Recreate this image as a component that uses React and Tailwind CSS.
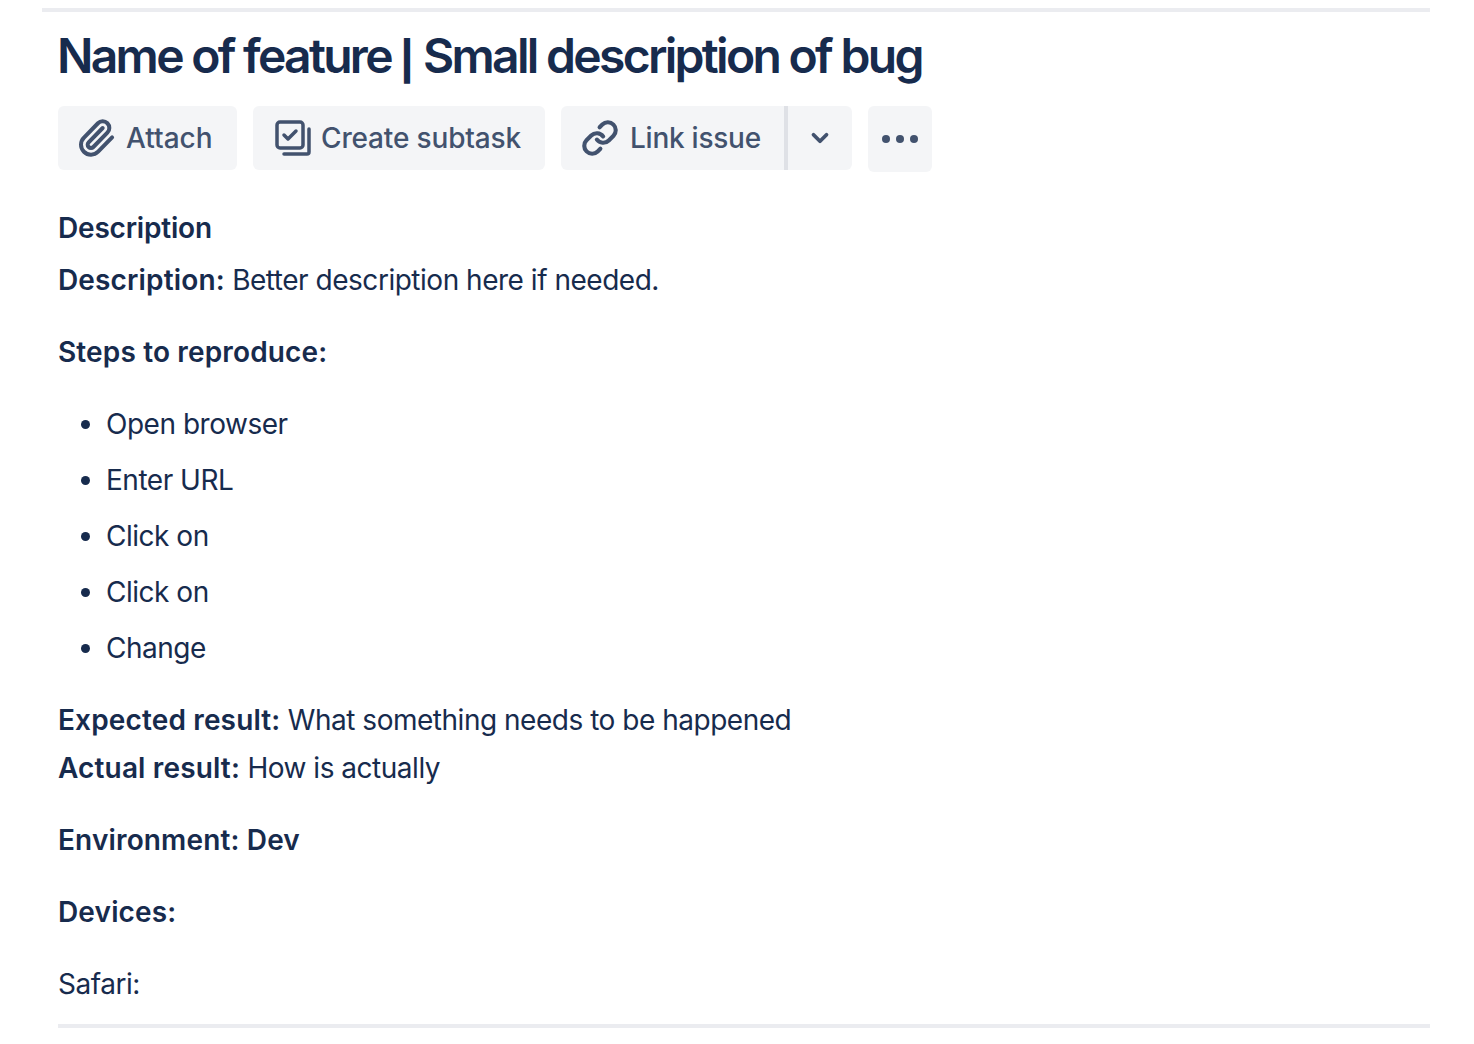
import React from "react";
import { Link, Paperclip, ChevronDown } from "lucide-react";

const SubtaskIcon = () => (
  <svg width="36" height="36" viewBox="0 0 36 36" fill="none" stroke="#42526e" strokeLinecap="round" strokeLinejoin="round">
    <rect x="2" y="2" width="26" height="26" rx="3" strokeWidth="3.5" />
    <path d="m9 15 4 4 8-8" strokeWidth="3.500" />
    <path d="M9 34h23a2 2 0 0 0 2-2V9" strokeWidth="3.500" />
  </svg>
);

const Button = ({ icon, label, className = "" }) => (
  <button className={`h-16 flex items-center bg-[#f4f5f7] text-[#42526e] text-[28px] font-medium ${className}`}>
    {icon}
    <span>{label}</span>
  </button>
);

const Bold = ({ children }) => <strong className="font-semibold tracking-[0.15px]">{children}</strong>;

const steps = ["Open browser", "Enter URL", "Click on", "Click on", "Change"];

export default function App() {
  return (
    <div className="min-h-screen bg-white text-[#172b4d] font-['Inter',sans-serif] pt-2 pr-11 pl-[42px]">
      <div className="h-1 bg-[#ebecf0]" />
      <div className="pl-4">
        <h1 className="mt-5 -ml-px text-[48px] leading-[48px] h-12 font-semibold tracking-[-2.7px]">
          Name of feature <span className="font-['Liberation_Sans',sans-serif] tracking-normal">|</span> Small description of bug
        </h1>

        <div className="mt-[26px] flex items-start">
          <Button icon={<Paperclip size={40} strokeWidth={2.4} className="mr-[10px] -ml-0.5" />} label="Attach" className="w-[179px] pl-[20px] rounded-md" />
          <Button icon={<span className="mr-[10px]"><SubtaskIcon /></span>} label="Create subtask" className="w-[292px] ml-4 pl-[22px] rounded-md tracking-[-0.15px]" />
          <Button icon={<Link size={38} strokeWidth={2.6} className="mr-[11px]" />} label="Link issue" className="w-[223px] ml-4 pl-5 rounded-l-md tracking-[-0.25px]" />
          <div className="w-1 h-16 bg-[#dfe1e6]" />
          <button className="w-[64px] h-16 flex items-center justify-center bg-[#f4f5f7] text-[#42526e] rounded-r-md">
            <ChevronDown size={26} strokeWidth={3.5} />
          </button>
          <button className="w-16 h-[66px] ml-4 flex items-center justify-center gap-1.5 bg-[#f4f5f7] rounded-md">
            <span className="w-2 h-2 rounded-full bg-[#42526e]" />
            <span className="w-2 h-2 rounded-full bg-[#42526e]" />
            <span className="w-2 h-2 rounded-full bg-[#42526e]" />
          </button>
        </div>

        <div className="mt-8 text-[28px] leading-[48px] tracking-[-0.48px]">
          <h2 className="font-semibold tracking-[-0.2px]">Description</h2>
          <p className="mt-1"><Bold>Description:</Bold> Better description here if needed.</p>
          <p className="mt-6"><Bold>Steps to reproduce:</Bold></p>
          <ul className="mt-6 flex flex-col gap-2 pl-12 list-disc">
            {steps.map((step, i) => (
              <li key={i}>{step}</li>
            ))}
          </ul>
          <p className="mt-6"><Bold>Expected result:</Bold> What something needs to be happened</p>
          <p><Bold>Actual result:</Bold> How is actually</p>
          <p className="mt-6"><Bold>Environment: Dev</Bold></p>
          <p className="mt-6"><Bold>Devices:</Bold></p>
          <p className="mt-6">Safari:</p>
        </div>

        <div className="mt-4 h-1 bg-[#ebecf0]" />
      </div>
    </div>
  );
}
